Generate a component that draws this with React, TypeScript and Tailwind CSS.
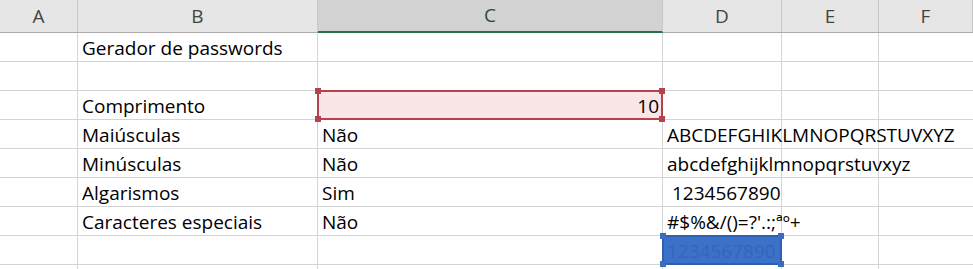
import React from "react";

const widths = ["w-[78px]", "w-[240px]", "w-[345px]", "w-[119px]", "w-[97px]", "flex-1"];

const rows: string[][] = [
  ["", "Gerador de passwords", "", "", "", ""],
  ["", "", "", "", "", ""],
  ["", "Comprimento", "", "", "", ""],
  ["", "Maiúsculas", "Não", "ABCDEFGHIKLMNOPQRSTUVXYZ", "", ""],
  ["", "Minúsculas", "Não", "abcdefghijklmnopqrstuvxyz", "", ""],
  ["", "Algarismos", "Sim", " 1234567890", "", ""],
  ["", "Caracteres especiais", "Não", "#$%&/()=?'.:;ªº+", "", ""],
  ["", "", "", "", "", ""],
  ["", "", "", "", "", ""],
];

function Handle({ cls }: { cls: string }) {
  return <div className={"absolute w-[6px] h-[6px] " + cls} />;
}

export default function App() {
  return (
    <div className="w-[973px] h-[269px] bg-white overflow-hidden text-[19px] text-black" style={{ fontFamily: "'Open Sans', sans-serif" }}>
      {/* header */}
      <div className="flex h-[33px] bg-[#e6e6e6] border-b border-[#ababab]">
        {["A", "B", "C", "D", "E", "F"].map((l, i) => (
          <div
            key={l}
            className={
              widths[i] +
              " flex items-center justify-center border-r border-[#c8c8c8] text-[19px] " +
              (l === "C" ? "bg-[#d2d2d2] text-[#2f4a3c] border-b-2 border-b-[#217346] -mb-px" : "text-[#444]")
            }
          >
            {l}
          </div>
        ))}
      </div>
      {/* body */}
      <div className="relative">
        {rows.map((r, ri) => (
          <div key={ri} className="flex h-[29px]">
            {r.map((c, ci) => (
              <div
                key={ci}
                className={
                  widths[ci] +
                  " border-r border-b border-[#d4d4d4] flex items-end pl-[4px] pb-[1px] leading-[24px] whitespace-pre overflow-visible " +
                  (ci === 5 ? "border-r-0" : "")
                }
              >
                <span className="relative z-10">{c}</span>
              </div>
            ))}
          </div>
        ))}
        {/* red selection C3 */}
        <div className="absolute left-[317px] top-[57px] w-[346px] h-[30px] border-2 border-[#b5434f] bg-[#fbe6e7] flex items-end justify-end pr-[2px] pb-[0px] leading-[24px]">
          <span>10</span>
          <Handle cls="bg-[#b5434f] -left-[4px] -top-[4px]" />
          <Handle cls="bg-[#b5434f] -right-[4px] -top-[4px]" />
          <Handle cls="bg-[#b5434f] -left-[4px] -bottom-[4px]" />
          <Handle cls="bg-[#b5434f] -right-[4px] -bottom-[4px]" />
        </div>
        {/* blue selection D9 */}
        <div className="absolute left-[662px] top-[202px] w-[120px] h-[30px] border-2 border-[#2f5fb0] bg-[#3b71c8] leading-[24px] text-[#3466b9]">
          <div className="w-full h-full overflow-hidden flex items-end pl-[3px]">
            <span className="whitespace-nowrap">1234567890</span>
          </div>
          <Handle cls="bg-[#3b6cc0] -left-[4px] -top-[4px]" />
          <Handle cls="bg-[#3b6cc0] -right-[4px] -top-[4px]" />
          <Handle cls="bg-[#3b6cc0] -left-[4px] -bottom-[4px]" />
          <Handle cls="bg-[#3b6cc0] -right-[4px] -bottom-[4px]" />
        </div>
      </div>
    </div>
  );
}
